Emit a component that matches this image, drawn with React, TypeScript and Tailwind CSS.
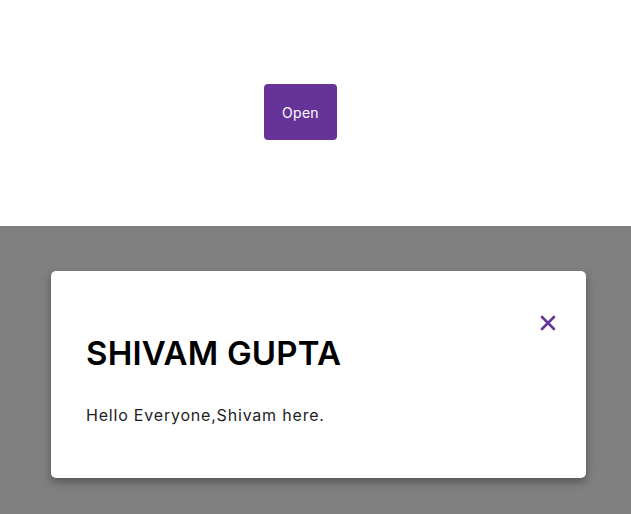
import React from "react";

export default function App() {
  return (
    <div className="w-[631px] h-[514px] flex flex-col bg-white" style={{ fontFamily: "Inter, 'Noto Sans', sans-serif" }}>
      <div className="h-[226px] flex flex-col items-start">
        <button className="mt-[84px] ml-[264px] w-[73px] h-[56px] rounded-[4px] bg-[#663399] text-white text-[14px] tracking-[0.3px]">
          Open
        </button>
      </div>
      <div className="flex-1 bg-[#808080] pt-[45px] pl-[51px]">
        <div className="relative w-[535px] h-[207px] bg-white rounded-[5px] shadow-[0_4px_10px_rgba(0,0,0,0.35)] pl-[35px] pt-[62px]">
          <button className="absolute right-[30px] top-[44px] text-[#663399]">
            <svg width="16" height="16" viewBox="0 0 16 16" fill="none" stroke="currentColor" strokeWidth="2.6" strokeLinecap="round">
              <path d="M2 2L14 14M14 2L2 14" />
            </svg>
          </button>
          <h1 className="text-[33px] leading-[40px] font-semibold text-black tracking-[0.2px]">SHIVAM GUPTA</h1>
          <p className="mt-[31px] text-[16px] leading-[22px] text-[#222] font-normal tracking-[0.8px]">Hello Everyone,Shivam here.</p>
        </div>
      </div>
    </div>
  );
}
